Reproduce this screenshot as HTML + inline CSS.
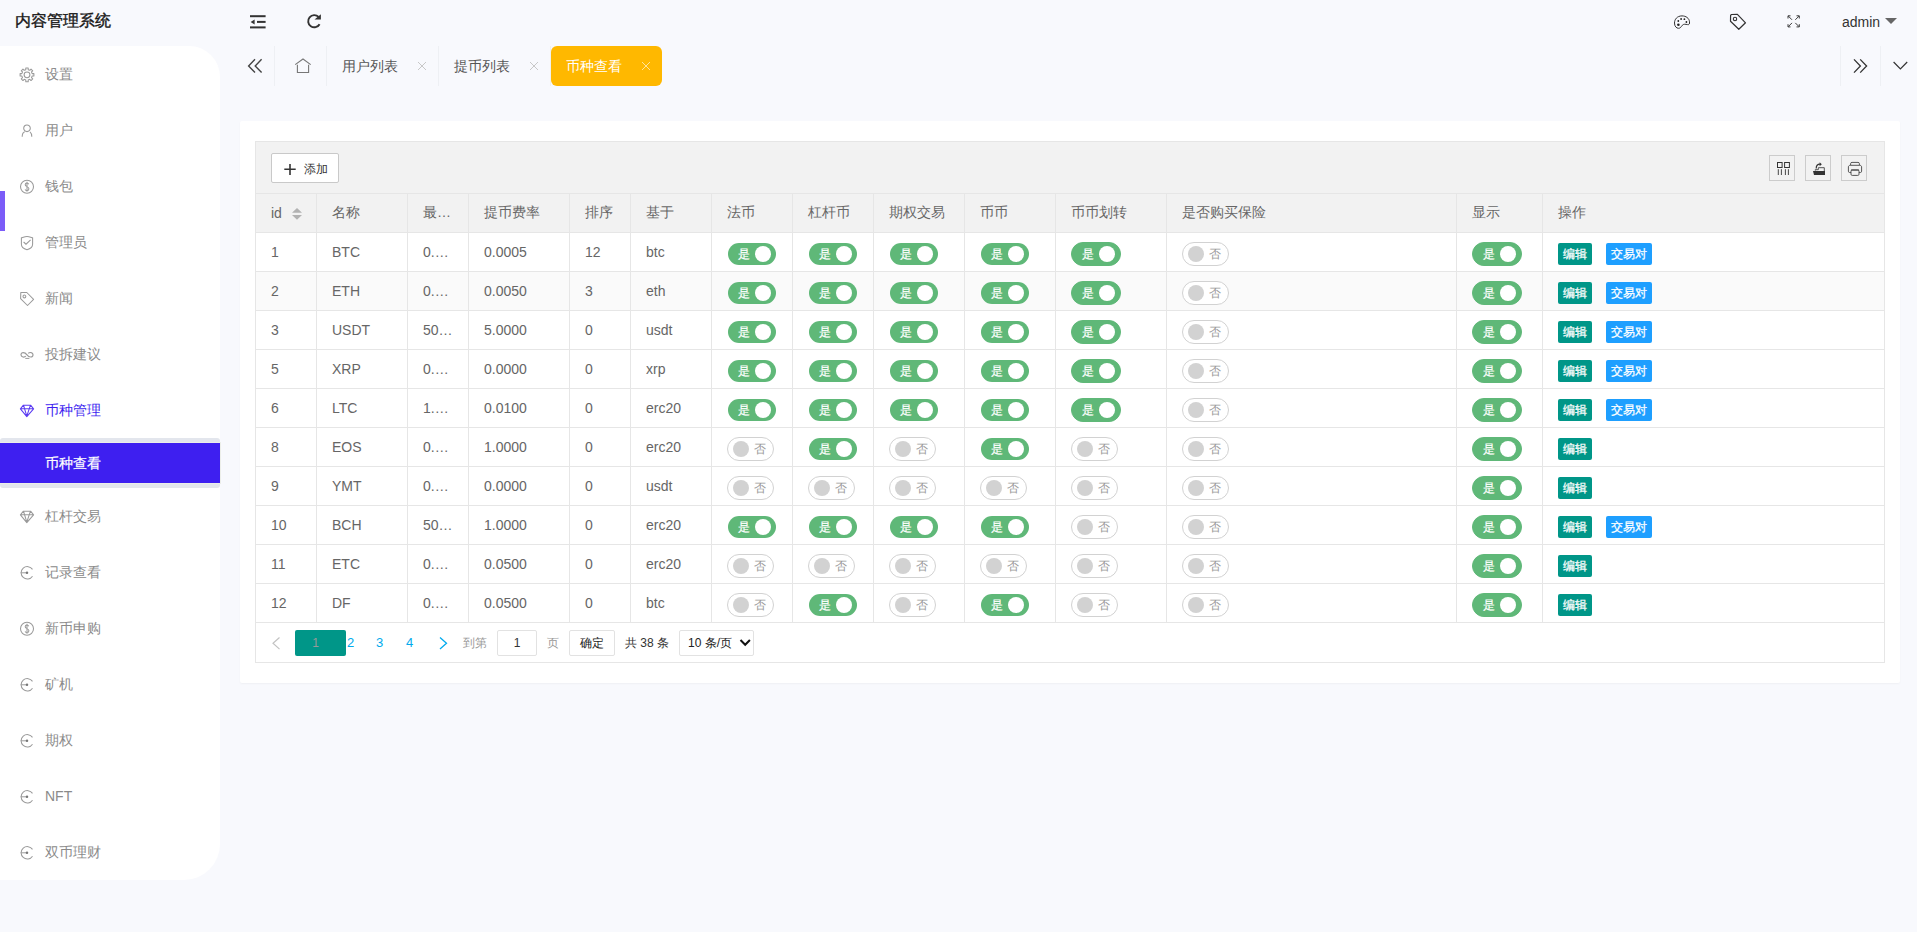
<!DOCTYPE html><html><head><meta charset="utf-8"><style>*{box-sizing:border-box;margin:0;padding:0}
html,body{width:1917px;height:932px;overflow:hidden;background:#f8f9fd;font-family:"Liberation Sans",sans-serif;color:#333}
.abs{position:absolute}
#title{left:15px;top:9.5px;font-size:16px;font-weight:normal;color:#1a1a1a;line-height:22px;-webkit-text-stroke:0.4px #1a1a1a}
#side{left:0;top:46px;width:220px;height:834px;background:#fff;border-radius:0 31px 36px 0}
.mi{position:absolute;left:45px;font-size:14px;color:#888;line-height:20px;white-space:nowrap}
#bar{left:0;top:191px;width:5px;height:40px;background:#7b5cf8}
#subsel{left:0;top:438px;width:220px;height:50px;background:#e3e6ed;border-radius:3px}
#subsel div{position:absolute;left:0;top:5px;width:220px;height:40px;background:#3e1ff0;color:#fff;font-size:14px;line-height:40px;padding-left:45px;outline:1px solid #eceee9;-webkit-text-stroke:0.2px #fff}
.tab{position:absolute;top:46px;height:40px;line-height:40px;font-size:14px;color:#555;white-space:nowrap}
.tabsep{position:absolute;top:46px;width:1px;height:40px;background:#eef0f4}
.tx{position:absolute;top:46px;line-height:40px;font-size:16px;color:#bbb}
#card{left:240px;top:121px;width:1660px;height:562px;background:#fff;border-radius:2px;box-shadow:0 1px 2px rgba(0,0,0,.04)}
#tbl{left:255px;top:141px;width:1630px;height:522px;border:1px solid #e6e6e6}
#tool{position:absolute;left:0;top:0;width:1628px;height:51px;background:#f2f2f2}
table{border-collapse:collapse;table-layout:fixed;position:absolute}
td,th{border:1px solid #e6e6e6;height:39px;padding:0 0 0 15px;font-size:14px;color:#666;font-weight:normal;text-align:left;white-space:nowrap;overflow:hidden}
th{background:#f2f2f2}
tr.ev td{background:#fafafa}
.sw{position:relative;top:2px;display:inline-block;vertical-align:middle;height:24px;border-radius:20px}
.on{width:50px;background:#5fb878;border:1px solid #5fb878}
.lite{border-color:transparent;background-clip:padding-box}
.off{width:47px;background:#fff;border:1px solid #d2d2d2}
.sw i{position:absolute;top:3px;width:16px;height:16px;border-radius:50%}
.on i{left:27px;background:#fff}
.off i{left:5px;background:#d2d2d2}
.sw b{position:absolute;top:0;font-weight:normal;font-size:12px;line-height:22px}
.on b{left:10px;color:#fff;-webkit-text-stroke:0.2px #fff}
.off b{left:26px;color:#999}
.bx{position:relative;top:2px;display:inline-block;vertical-align:middle;height:22px;line-height:22px;padding:0 5px;font-size:12px;color:#fff;border-radius:2px;-webkit-text-stroke:0.25px #fff}
.ed{background:#009688}
.jy{background:#1e9fff;margin-left:14px}
</style></head><body>
<div id="title" class="abs">内容管理系统</div>
<div class="abs" style="left:1842px;top:12px;font-size:14px;line-height:20px;color:#333">admin</div>
<div id="side" class="abs"></div>
<div id="bar" class="abs"></div>
<div class="mi" style="top:64px;color:#8a8a8a">设置</div>
<div class="mi" style="top:120px;color:#8a8a8a">用户</div>
<div class="mi" style="top:176px;color:#8a8a8a">钱包</div>
<div class="mi" style="top:232px;color:#8a8a8a">管理员</div>
<div class="mi" style="top:288px;color:#8a8a8a">新闻</div>
<div class="mi" style="top:344px;color:#8a8a8a">投拆建议</div>
<div class="mi" style="top:400px;color:#3e1ff0">币种管理</div>
<div class="mi" style="top:506px;color:#8a8a8a">杠杆交易</div>
<div class="mi" style="top:562px;color:#8a8a8a">记录查看</div>
<div class="mi" style="top:618px;color:#8a8a8a">新币申购</div>
<div class="mi" style="top:674px;color:#8a8a8a">矿机</div>
<div class="mi" style="top:730px;color:#8a8a8a">期权</div>
<div class="mi" style="top:786px;color:#8a8a8a">NFT</div>
<div class="mi" style="top:842px;color:#8a8a8a">双币理财</div>
<div id="subsel" class="abs"><div>币种查看</div></div>
<div class="tabsep" style="left:274px"></div>
<div class="tabsep" style="left:326px"></div>
<div class="tab" style="left:342px">用户列表</div>
<div class="tabsep" style="left:438px"></div>
<div class="tab" style="left:454px">提币列表</div>
<div class="tabsep" style="left:550px;background:#f1f1ee"></div>
<div class="abs" style="left:551px;top:46px;width:111px;height:40px;background:#ffb800;border-radius:6px"></div>
<div class="tab" style="left:566px;color:#fff">币种查看</div>
<div class="tabsep" style="left:1840px"></div><div class="tabsep" style="left:1880px"></div>
<div class="abs" id="card"></div>
<div class="abs" id="tbl"><div id="tool"></div></div>
<div class="abs" style="left:271px;top:153px;width:68px;height:30px;background:#fff;border:1px solid #c9c9c9;border-radius:2px"></div>
<div class="abs" style="left:304px;top:158.5px;font-size:12px;line-height:20px;color:#333">添加</div>
<div class="abs" style="left:1769px;top:155px;width:26px;height:26px;border:1px solid #ccc"></div>
<div class="abs" style="left:1805px;top:155px;width:26px;height:26px;border:1px solid #ccc"></div>
<div class="abs" style="left:1841px;top:155px;width:26px;height:26px;border:1px solid #ccc"></div>
<table class="abs" style="left:255px;top:193px">
<colgroup><col style="width:61px"><col style="width:91px"><col style="width:61px"><col style="width:101px"><col style="width:61px"><col style="width:81px"><col style="width:81px"><col style="width:81px"><col style="width:91px"><col style="width:91px"><col style="width:111px"><col style="width:290px"><col style="width:86px"><col style="width:342px"></colgroup>
<tr><th>id</th><th>名称</th><th>最…</th><th>提币费率</th><th>排序</th><th>基于</th><th>法币</th><th>杠杆币</th><th>期权交易</th><th>币币</th><th>币币划转</th><th>是否购买保险</th><th>显示</th><th>操作</th></tr>
<tr><td>1</td><td>BTC</td><td>0.…</td><td>0.0005</td><td>12</td><td>btc</td><td><span class="sw on lite"><b>是</b><i></i></span></td><td><span class="sw on lite"><b>是</b><i></i></span></td><td><span class="sw on lite"><b>是</b><i></i></span></td><td><span class="sw on lite"><b>是</b><i></i></span></td><td><span class="sw on"><b>是</b><i></i></span></td><td><span class="sw off"><i></i><b>否</b></span></td><td><span class="sw on"><b>是</b><i></i></span></td><td><span class="bx ed">编辑</span><span class="bx jy">交易对</span></td></tr>
<tr class="ev"><td>2</td><td>ETH</td><td>0.…</td><td>0.0050</td><td>3</td><td>eth</td><td><span class="sw on lite"><b>是</b><i></i></span></td><td><span class="sw on lite"><b>是</b><i></i></span></td><td><span class="sw on lite"><b>是</b><i></i></span></td><td><span class="sw on lite"><b>是</b><i></i></span></td><td><span class="sw on"><b>是</b><i></i></span></td><td><span class="sw off"><i></i><b>否</b></span></td><td><span class="sw on"><b>是</b><i></i></span></td><td><span class="bx ed">编辑</span><span class="bx jy">交易对</span></td></tr>
<tr><td>3</td><td>USDT</td><td>50…</td><td>5.0000</td><td>0</td><td>usdt</td><td><span class="sw on lite"><b>是</b><i></i></span></td><td><span class="sw on lite"><b>是</b><i></i></span></td><td><span class="sw on lite"><b>是</b><i></i></span></td><td><span class="sw on lite"><b>是</b><i></i></span></td><td><span class="sw on"><b>是</b><i></i></span></td><td><span class="sw off"><i></i><b>否</b></span></td><td><span class="sw on"><b>是</b><i></i></span></td><td><span class="bx ed">编辑</span><span class="bx jy">交易对</span></td></tr>
<tr><td>5</td><td>XRP</td><td>0.…</td><td>0.0000</td><td>0</td><td>xrp</td><td><span class="sw on lite"><b>是</b><i></i></span></td><td><span class="sw on lite"><b>是</b><i></i></span></td><td><span class="sw on lite"><b>是</b><i></i></span></td><td><span class="sw on lite"><b>是</b><i></i></span></td><td><span class="sw on"><b>是</b><i></i></span></td><td><span class="sw off"><i></i><b>否</b></span></td><td><span class="sw on"><b>是</b><i></i></span></td><td><span class="bx ed">编辑</span><span class="bx jy">交易对</span></td></tr>
<tr><td>6</td><td>LTC</td><td>1.…</td><td>0.0100</td><td>0</td><td>erc20</td><td><span class="sw on lite"><b>是</b><i></i></span></td><td><span class="sw on lite"><b>是</b><i></i></span></td><td><span class="sw on lite"><b>是</b><i></i></span></td><td><span class="sw on lite"><b>是</b><i></i></span></td><td><span class="sw on"><b>是</b><i></i></span></td><td><span class="sw off"><i></i><b>否</b></span></td><td><span class="sw on"><b>是</b><i></i></span></td><td><span class="bx ed">编辑</span><span class="bx jy">交易对</span></td></tr>
<tr><td>8</td><td>EOS</td><td>0.…</td><td>1.0000</td><td>0</td><td>erc20</td><td><span class="sw off"><i></i><b>否</b></span></td><td><span class="sw on lite"><b>是</b><i></i></span></td><td><span class="sw off"><i></i><b>否</b></span></td><td><span class="sw on lite"><b>是</b><i></i></span></td><td><span class="sw off"><i></i><b>否</b></span></td><td><span class="sw off"><i></i><b>否</b></span></td><td><span class="sw on"><b>是</b><i></i></span></td><td><span class="bx ed">编辑</span></td></tr>
<tr><td>9</td><td>YMT</td><td>0.…</td><td>0.0000</td><td>0</td><td>usdt</td><td><span class="sw off"><i></i><b>否</b></span></td><td><span class="sw off"><i></i><b>否</b></span></td><td><span class="sw off"><i></i><b>否</b></span></td><td><span class="sw off"><i></i><b>否</b></span></td><td><span class="sw off"><i></i><b>否</b></span></td><td><span class="sw off"><i></i><b>否</b></span></td><td><span class="sw on"><b>是</b><i></i></span></td><td><span class="bx ed">编辑</span></td></tr>
<tr><td>10</td><td>BCH</td><td>50…</td><td>1.0000</td><td>0</td><td>erc20</td><td><span class="sw on lite"><b>是</b><i></i></span></td><td><span class="sw on lite"><b>是</b><i></i></span></td><td><span class="sw on lite"><b>是</b><i></i></span></td><td><span class="sw on lite"><b>是</b><i></i></span></td><td><span class="sw off"><i></i><b>否</b></span></td><td><span class="sw off"><i></i><b>否</b></span></td><td><span class="sw on"><b>是</b><i></i></span></td><td><span class="bx ed">编辑</span><span class="bx jy">交易对</span></td></tr>
<tr><td>11</td><td>ETC</td><td>0.…</td><td>0.0500</td><td>0</td><td>erc20</td><td><span class="sw off"><i></i><b>否</b></span></td><td><span class="sw off"><i></i><b>否</b></span></td><td><span class="sw off"><i></i><b>否</b></span></td><td><span class="sw off"><i></i><b>否</b></span></td><td><span class="sw off"><i></i><b>否</b></span></td><td><span class="sw off"><i></i><b>否</b></span></td><td><span class="sw on"><b>是</b><i></i></span></td><td><span class="bx ed">编辑</span></td></tr>
<tr><td>12</td><td>DF</td><td>0.…</td><td>0.0500</td><td>0</td><td>btc</td><td><span class="sw off"><i></i><b>否</b></span></td><td><span class="sw on lite"><b>是</b><i></i></span></td><td><span class="sw off"><i></i><b>否</b></span></td><td><span class="sw on lite"><b>是</b><i></i></span></td><td><span class="sw off"><i></i><b>否</b></span></td><td><span class="sw off"><i></i><b>否</b></span></td><td><span class="sw on"><b>是</b><i></i></span></td><td><span class="bx ed">编辑</span></td></tr>
</table>
<div class="abs" style="left:295px;top:630px;width:51px;height:26px;background:#009688;border-radius:2px;color:#999;font-size:12px;line-height:26px;text-align:center;padding-right:10px">1</div>
<div class="abs" style="left:347px;top:633px;font-size:13px;line-height:20px;color:#01aaed">2</div>
<div class="abs" style="left:376px;top:633px;font-size:13px;line-height:20px;color:#01aaed">3</div>
<div class="abs" style="left:406px;top:633px;font-size:13px;line-height:20px;color:#01aaed">4</div>
<div class="abs" style="left:463px;top:633px;font-size:12px;line-height:20px;color:#999">到第</div>
<div class="abs" style="left:497px;top:630px;width:40px;height:26px;border:1px solid #e2e2e2;border-radius:2px;font-size:12px;line-height:24px;text-align:center;color:#333">1</div>
<div class="abs" style="left:547px;top:633px;font-size:12px;line-height:20px;color:#999">页</div>
<div class="abs" style="left:569px;top:630px;width:46px;height:26px;border:1px solid #e2e2e2;border-radius:2px;font-size:12px;line-height:24px;text-align:center;color:#222">确定</div>
<div class="abs" style="left:625px;top:633px;font-size:12px;line-height:20px;color:#333">共 38 条</div>
<div class="abs" style="left:679px;top:630px;width:75px;height:26px;border:1px solid #e2e2e2;border-radius:2px;font-size:12px;line-height:24px;padding-left:8px;color:#222">10 条/页</div>
<svg class="abs" style="left:0;top:0" width="1917" height="932" viewBox="0 0 1917 932"><g fill="#333"><rect x="250" y="15.2" width="15.6" height="2"/><rect x="257" y="20.9" width="8.6" height="2"/><rect x="250" y="26.4" width="15.6" height="2"/><path d="M250.6 21.9 L254.6 19.4 L254.6 24.4 Z"/></g><path d="M319.6 24.2 A6.1 6.1 0 1 1 318.6 16.9" fill="none" stroke="#333" stroke-width="1.9"/><path d="M314.5 19.6 L320.9 19.6 L320.9 14.2 Z" fill="#333"/><path d="M1682 15.9 C1677 15.9 1674.5 19.5 1674.5 23 C1674.5 26.5 1676.5 28.3 1678.5 28.3 C1680.5 28.3 1681 26.8 1682.3 25.3 C1683.6 23.8 1685.5 24.2 1687.5 24.6 C1689.5 25 1689.6 23.6 1689.5 21.8 C1689.2 18.2 1686 15.9 1682 15.9 Z" fill="none" stroke="#333" stroke-width="1"/><g fill="#222"><circle cx="1678.4" cy="24.8" r="1.3"/><circle cx="1678.3" cy="21" r="0.9"/><circle cx="1681.1" cy="19" r="0.9"/><circle cx="1684.4" cy="19.2" r="0.9"/><circle cx="1686.4" cy="22" r="0.9"/></g><path d="M1730.6 15.3 L1731.4 14.5 L1737.4 14.4 L1745.5 22.8 L1738.8 29.3 L1730.5 21.3 Z" fill="none" stroke="#333" stroke-width="1.2" stroke-linejoin="round"/><circle cx="1735" cy="19" r="1.7" fill="none" stroke="#333" stroke-width="1.1"/><g fill="none" stroke="#333" stroke-width="0.95"><path d="M1788 18.5 V15.8 H1790.5 M1788.3 16.1 L1792 19.8"/><path d="M1796.5 15.8 H1799.3 V18.5 M1799 16.1 L1795.3 19.8"/><path d="M1788 24.2 V26.9 H1790.5 M1788.3 26.6 L1792 22.9"/><path d="M1796.5 26.9 H1799.3 V24.2 M1799 26.6 L1795.3 22.9"/></g><path d="M1885 18 L1897 18 L1891 24 Z" fill="#666"/><g transform="translate(27,74.8)" fill="none" stroke="#9a9a9a" stroke-width="1.05"><path d="M5.16 -1.19 L6.89 -1.22 L6.89 1.22 L5.16 1.19 L4.49 2.81 L5.73 4.02 L4.02 5.73 L2.81 4.49 L1.19 5.16 L1.22 6.89 L-1.22 6.89 L-1.19 5.16 L-2.81 4.49 L-4.02 5.73 L-5.73 4.02 L-4.49 2.81 L-5.16 1.19 L-6.89 1.22 L-6.89 -1.22 L-5.16 -1.19 L-4.49 -2.81 L-5.73 -4.02 L-4.02 -5.73 L-2.81 -4.49 L-1.19 -5.16 L-1.22 -6.89 L1.22 -6.89 L1.19 -5.16 L2.81 -4.49 L4.02 -5.73 L5.73 -4.02 L4.49 -2.81 Z" stroke-linejoin="round"/><circle cx="0" cy="0" r="2.9"/></g><g transform="translate(27,130.8)" fill="none" stroke="#9a9a9a" stroke-width="1.05"><circle cx="0" cy="-2.5" r="3.3"/><path d="M-4.8 6 C-4.8 2.6 -3.2 1.2 -2.2 0.9 M4.8 6 C4.8 3.5 4 1.8 3 1"/></g><g transform="translate(27,186.8)" fill="none" stroke="#9a9a9a" stroke-width="1.05"><circle cx="0" cy="0" r="6.5"/><path d="M1.7 -2.6 C1.4 -3.4 0.8 -3.8 0 -3.8 C-1 -3.8 -1.8 -3.1 -1.8 -2.1 C-1.8 0 1.9 -0.3 1.9 2 C1.9 3 1.1 3.8 0 3.8 C-0.9 3.8 -1.6 3.3 -1.9 2.6 M0 -5 V5"/></g><g transform="translate(27,242.8)" fill="none" stroke="#9a9a9a" stroke-width="1.05"><path d="M0 -6.4 C2 -6.4 4 -5.5 5.6 -5 V1.5 C5.6 4.5 2.8 6.2 0 7 C-2.8 6.2 -5.6 4.5 -5.6 1.5 V-5 C-4 -5.5 -2 -6.4 0 -6.4 Z"/><path d="M-3.4 -0.8 L-1 1.4 L3.6 -3"/></g><g transform="translate(27,298.8)" fill="none" stroke="#9a9a9a" stroke-width="1.05"><path d="M-6.2 -6.3 H-0.2 L6.6 0.6 L0.5 6.7 L-6.4 -0.2 Z" stroke-linejoin="round"/><circle cx="-2.6" cy="-2.3" r="1.4"/></g><g transform="translate(27,354.8)" fill="none" stroke="#9a9a9a" stroke-width="1.05"><path d="M-1.2 1.2 C-2.4 2.8 -6 2.6 -6 0 C-6 -3 -2.2 -3 0 0 C2 2.8 6 3 6 0 C6 -2.6 2.6 -2.8 1.2 -1.4" stroke-width="1.2"/><path d="M-1.7 3.6 H2.4" stroke-width="1"/></g><g transform="translate(27,410.8)" fill="none" stroke="#5b3cf2" stroke-width="1.05"><path d="M-3.6 -5.6 H3.6 L6.6 -2 L-0.2 5.8 L-6.6 -2 Z M-6.4 -2 H6.4 M-3.4 -5.4 L-2.4 -2 L-0.2 5.4 L2.2 -2 L3.4 -5.4" stroke-linejoin="round"/></g><g transform="translate(27,516.8)" fill="none" stroke="#9a9a9a" stroke-width="1.05"><path d="M-3.6 -5.6 H3.6 L6.6 -2 L-0.2 5.8 L-6.6 -2 Z M-6.4 -2 H6.4 M-3.4 -5.4 L-2.4 -2 L-0.2 5.4 L2.2 -2 L3.4 -5.4" stroke-linejoin="round"/></g><g transform="translate(27,572.8)" fill="none" stroke="#9a9a9a" stroke-width="1.05"><path d="M5.5 -3.4 A6.2 6.2 0 1 0 5.5 3.4" stroke-width="1.05"/><path d="M-6.3 0 H0" stroke-width="1"/><circle cx="0" cy="0" r="1.25" fill="#777" stroke="none"/></g><g transform="translate(27,628.8)" fill="none" stroke="#9a9a9a" stroke-width="1.05"><circle cx="0" cy="0" r="6.5"/><path d="M1.7 -2.6 C1.4 -3.4 0.8 -3.8 0 -3.8 C-1 -3.8 -1.8 -3.1 -1.8 -2.1 C-1.8 0 1.9 -0.3 1.9 2 C1.9 3 1.1 3.8 0 3.8 C-0.9 3.8 -1.6 3.3 -1.9 2.6 M0 -5 V5"/></g><g transform="translate(27,684.8)" fill="none" stroke="#9a9a9a" stroke-width="1.05"><path d="M5.5 -3.4 A6.2 6.2 0 1 0 5.5 3.4" stroke-width="1.05"/><path d="M-6.3 0 H0" stroke-width="1"/><circle cx="0" cy="0" r="1.25" fill="#777" stroke="none"/></g><g transform="translate(27,740.8)" fill="none" stroke="#9a9a9a" stroke-width="1.05"><path d="M5.5 -3.4 A6.2 6.2 0 1 0 5.5 3.4" stroke-width="1.05"/><path d="M-6.3 0 H0" stroke-width="1"/><circle cx="0" cy="0" r="1.25" fill="#777" stroke="none"/></g><g transform="translate(27,796.8)" fill="none" stroke="#9a9a9a" stroke-width="1.05"><path d="M5.5 -3.4 A6.2 6.2 0 1 0 5.5 3.4" stroke-width="1.05"/><path d="M-6.3 0 H0" stroke-width="1"/><circle cx="0" cy="0" r="1.25" fill="#777" stroke="none"/></g><g transform="translate(27,852.8)" fill="none" stroke="#9a9a9a" stroke-width="1.05"><path d="M5.5 -3.4 A6.2 6.2 0 1 0 5.5 3.4" stroke-width="1.05"/><path d="M-6.3 0 H0" stroke-width="1"/><circle cx="0" cy="0" r="1.25" fill="#777" stroke="none"/></g><path d="M255 59.2 L248.6 65.9 L255 72.6 M261.6 59.2 L255.2 65.9 L261.6 72.6" fill="none" stroke="#444" stroke-width="1.4"/><path d="M295.2 64.6 L303 59 L310.7 64.6 M297.4 64.8 V72.5 H308.6 V64.8" fill="none" stroke="#777" stroke-width="1.1"/><path d="M418 62 L426 70 M426 62 L418 70" stroke="#c8c8c8" stroke-width="1"/><path d="M530 62 L538 70 M538 62 L530 70" stroke="#c8c8c8" stroke-width="1"/><path d="M642 62 L650 70 M650 62 L642 70" stroke="#ffe39a" stroke-width="1"/><path d="M1854 59.4 L1860.4 66 L1854 72.6 M1860.2 59.4 L1866.6 66 L1860.2 72.6" fill="none" stroke="#333" stroke-width="1.3"/><path d="M1893.6 62 L1900.4 69 L1907.2 62" fill="none" stroke="#333" stroke-width="1.2"/><path d="M290 164 V175 M284.3 169.3 H295.7" stroke="#333" stroke-width="1.6"/><g fill="none" stroke="#333" stroke-width="1"><rect x="1777.5" y="162.5" width="4.6" height="5"/><rect x="1784.6" y="162.5" width="4.8" height="5"/></g><g stroke="#333" stroke-width="0.9"><path d="M1778.3 169.2 V175 M1781.4 169.2 V175 M1785.4 169.2 V175 M1788.4 169.2 V175"/></g><path d="M1813 171 H1825 V175 H1814 Z" fill="#333"/><path d="M1815.3 169.5 V170.6 M1815.3 169.7 H1818.3 V167.7 H1824.3 V171" fill="none" stroke="#444" stroke-width="0.9"/><path d="M1816.2 168.5 C1816.2 165.5 1817.8 164.2 1820 164.2" fill="none" stroke="#333" stroke-width="1.2"/><path d="M1819.6 162.2 L1821.8 164.2 L1819.6 166.2 Z" fill="#333"/><g fill="none" stroke="#555" stroke-width="1"><path d="M1850.6 165.3 V163.6 C1850.6 162.8 1851.2 162.4 1852 162.4 H1858 C1858.8 162.4 1859.4 162.8 1859.4 163.6 V165.3"/><path d="M1851 172.5 H1849.6 C1848.8 172.5 1848.4 172 1848.4 171.2 V167 C1848.4 165.9 1849.2 165.3 1850.3 165.3 H1859.7 C1860.8 165.3 1861.6 165.9 1861.6 167 V171.2 C1861.6 172 1861.2 172.5 1860.4 172.5 H1859"/><rect x="1851" y="170" width="8" height="5.4" rx="1.2"/></g><path d="M1851 170 H1859" stroke="#444" stroke-width="1"/><path d="M292 212.8 L297 208 L302 212.8 Z M292 215 L297 219.8 L302 215 Z" fill="#b2b2b2"/><path d="M279.5 637.5 L273 643.3 L279.5 649.1" fill="none" stroke="#c2c2c2" stroke-width="1.2"/><path d="M440 637.5 L446.5 643.3 L440 649.1" fill="none" stroke="#01aaed" stroke-width="1.3"/><path d="M740.5 640 L745.2 644.8 L749.9 640" fill="none" stroke="#111" stroke-width="2"/></svg>
</body></html>
